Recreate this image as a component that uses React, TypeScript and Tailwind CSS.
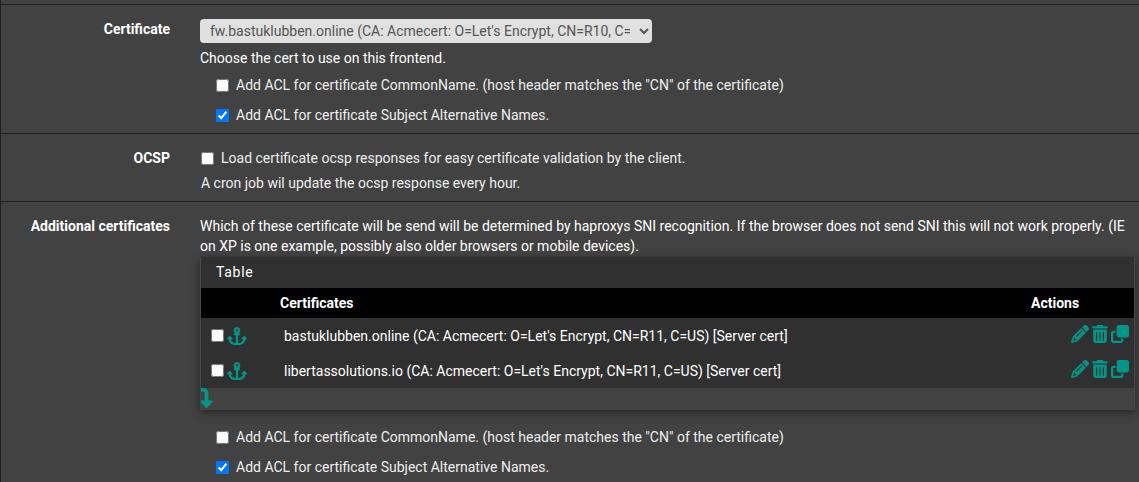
import { useState } from "react";
import { FaAnchor, FaClone, FaPencil, FaTrashCan, FaTurnDown } from "react-icons/fa6";

interface CheckFieldProps{
    label: string;
    initialChecked?: boolean;
}

interface FormRowProps{
    title: string;
    htmlFor?: string;
    children: React.ReactNode;
}

const certificates = [
    "bastuklubben.online (CA: Acmecert: O=Let's Encrypt, CN=R11, C=US) [Server cert]",
    "libertassolutions.io (CA: Acmecert: O=Let's Encrypt, CN=R11, C=US) [Server cert]",
];

const CheckField: React.FC<CheckFieldProps> = ({label, initialChecked = false}) => {
    const [checked, setChecked] = useState<boolean>(initialChecked);

    return(
        <label className="flex items-center gap-[7px] text-[#eeeeee]">
            <input
                type="checkbox"
                className="size-[13px] shrink-0"
                checked={checked}
                onChange={(e) => setChecked(e.target.checked)}
            />
            <span>{label}</span>
        </label>
    );
}

const AclOptions: React.FC = () => (
    <div className="flex flex-col gap-[10px] pl-4">
        <CheckField label={'Add ACL for certificate CommonName. (host header matches the "CN" of the certificate)'} />
        <CheckField label="Add ACL for certificate Subject Alternative Names." initialChecked />
    </div>
);

const FormRow: React.FC<FormRowProps> = ({title, htmlFor, children}) => (
    <div className="flex gap-[30px] border-t border-[#212121] pt-[14px] pr-1 pb-2">
        <label htmlFor={htmlFor} className="w-[169px] shrink-0 text-right font-bold">{title}</label>
        <div className="min-w-0 flex-1">{children}</div>
    </div>
);

const CertificateTable: React.FC = () => (
    <div className="mt-px overflow-hidden border-x border-[#484848] shadow-[0_3px_8px_rgba(0,0,0,0.4)]">
        <h2 className="bg-[#303030] px-[15px] pt-[5px] pb-[6px] tracking-wider">Table</h2>
        <table className="w-full">
            <thead className="bg-black text-left">
                <tr>
                    <th className="w-[75px]"></th>
                    <th className="px-1 py-[5px]">Certificates</th>
                    <th className="w-[107px] px-1 py-[5px]">Actions</th>
                </tr>
            </thead>
            <tbody className="bg-[#303030]">
                {certificates.map((name) => (
                    <tr key={name}>
                        <td className="h-[35px] pl-[10px]">
                            <div className="flex items-center gap-[3px]">
                                <input type="checkbox" aria-label={name} className="size-[13px]" />
                                <button type="button" aria-label="Move" className="text-[#009688]">
                                    <FaAnchor className="h-[18px] w-5" />
                                </button>
                            </div>
                        </td>
                        <td className="px-2">{name}</td>
                        <td className="pr-[5px]">
                            <div className="flex items-center justify-end gap-[3px] pb-1 text-[#009688]">
                                <button type="button" aria-label="Edit"><FaPencil className="size-[18px]" /></button>
                                <button type="button" aria-label="Delete"><FaTrashCan className="h-[18px] w-4" /></button>
                                <button type="button" aria-label="Copy"><FaClone className="size-[18px]" /></button>
                            </div>
                        </td>
                    </tr>
                ))}
            </tbody>
        </table>
        <div className="h-[22px] bg-[#424242]">
            <button type="button" aria-label="Add" className="-ml-0.5 block text-[#009688]">
                <FaTurnDown className="h-5 w-[15px]" />
            </button>
        </div>
    </div>
);

const App: React.FC = () => {
    return(
        <main className="min-h-screen border-l border-[#212121] bg-[#424242] pt-1 font-[Roboto,sans-serif] text-sm text-white">
            <FormRow title="Certificate" htmlFor="certificate">
                <select id="certificate" className="block h-6 w-[452px] max-w-full rounded bg-[#e0e0e0] px-[6px] text-[#555555]">
                    <option>fw.bastuklubben.online (CA: Acmecert: O=Let's Encrypt, CN=R10, C=US) [Server cert]</option>
                </select>
                <p className="mt-[5px] mb-[7px]">Choose the cert to use on this frontend.</p>
                <AclOptions />
            </FormRow>

            <FormRow title="OCSP">
                <div className="pl-px">
                    <CheckField label="Load certificate ocsp responses for easy certificate validation by the client." />
                    <p className="mt-[5px] text-[#eeeeee]">A cron job wil update the ocsp response every hour.</p>
                </div>
            </FormRow>

            <FormRow title="Additional certificates">
                <p>
                    Which of these certificate will be send will be determined by haproxys SNI recognition. If the browser does not send SNI this will not work properly. (IE on XP is one example, possibly also older browsers or mobile devices).
                </p>
                <CertificateTable />
                <div className="mt-[17px]">
                    <AclOptions />
                </div>
            </FormRow>
        </main>
    );
}

export default App;
